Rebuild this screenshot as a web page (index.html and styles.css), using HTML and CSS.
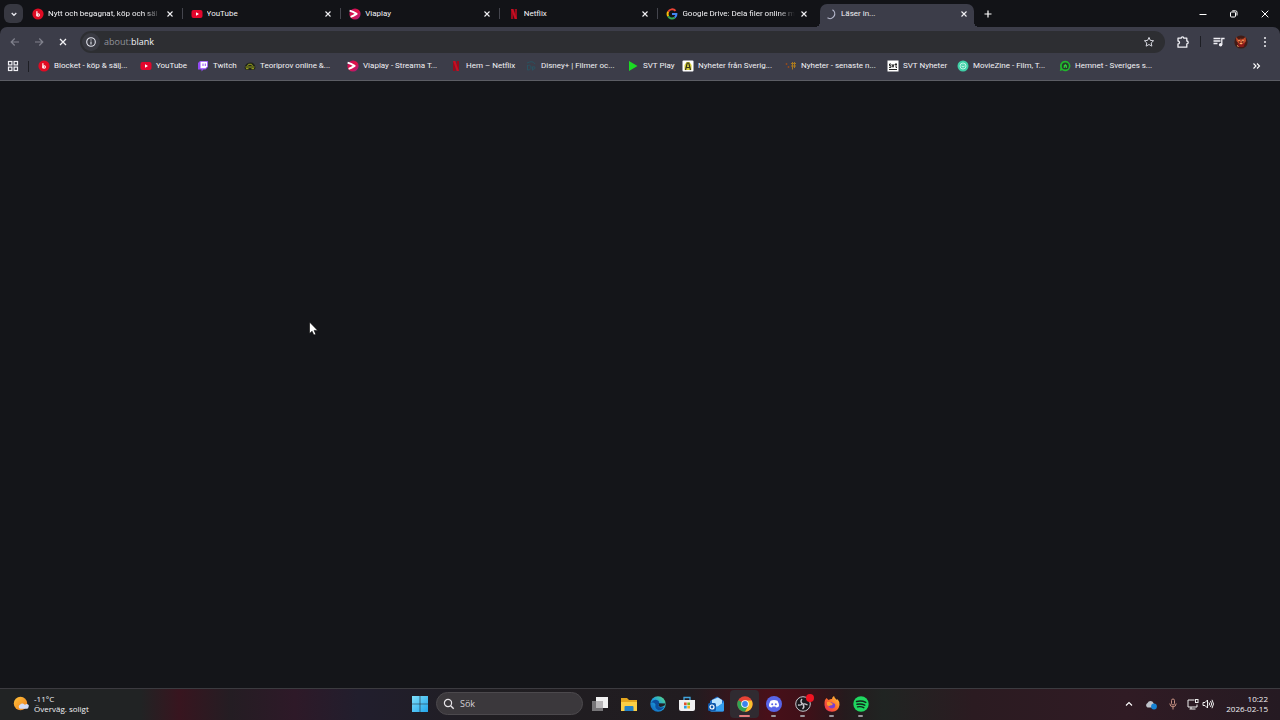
FILE: index.html
```html
<!DOCTYPE html>
<html lang="sv">
<head>
<meta charset="utf-8">
<title>Läser in...</title>
<link rel="stylesheet" href="styles.css">
</head>
<body>
<svg class="defs" aria-hidden="true">
  <defs>
    <linearGradient id="gVia" x1="0" y1="0" x2="1" y2="1"><stop offset="0" stop-color="#b80f6a"/><stop offset=".5" stop-color="#e21244"/><stop offset="1" stop-color="#9a1d8a"/></linearGradient>
    <linearGradient id="gWin" x1="0" y1="0" x2="1" y2="1"><stop offset="0" stop-color="#7fe0fb"/><stop offset="1" stop-color="#22a5ea"/></linearGradient>
    <linearGradient id="gEdge" x1="0" y1="1" x2="1" y2="0"><stop offset="0" stop-color="#0d5cb8"/><stop offset=".5" stop-color="#1f9fdc"/><stop offset="1" stop-color="#5fe07a"/></linearGradient>
    <linearGradient id="gFox" x1="0" y1="1" x2="1" y2="0"><stop offset="0" stop-color="#e8265a"/><stop offset=".5" stop-color="#ff6a2a"/><stop offset="1" stop-color="#ffd83d"/></linearGradient>
    <linearGradient id="gSun" x1="0" y1="0" x2="1" y2="1"><stop offset="0" stop-color="#ffc23c"/><stop offset="1" stop-color="#ee7d1c"/></linearGradient>
    <symbol id="close" viewBox="0 0 10 10"><path d="M2.500 2.500l5 5M7.500 2.500l-5 5" stroke="currentColor" stroke-width="1.100"/></symbol>
    <symbol id="blocket" viewBox="0 0 12 12"><circle cx="6" cy="6" r="5.600" fill="#e00b23"/><path d="M4.900 3.300v5" stroke="#fff" stroke-width="1.200"/><circle cx="6.200" cy="7" r="1.200" fill="none" stroke="#fff" stroke-width="1.100"/></symbol>
    <symbol id="youtube" viewBox="0 0 12 12"><rect x=".5" y="2" width="11" height="8" rx="2" fill="#e3062c"/><path d="M5 4.300L8 6 5 7.700z" fill="#fff"/></symbol>
    <symbol id="viaplay" viewBox="0 0 12 12"><circle cx="6" cy="6" r="5.600" fill="url(#gVia)"/><path d="M.6 2.700Q4 3.600 7.600 5.900 4 8.200 1.600 8.800" fill="none" stroke="#fff" stroke-width="1.900" stroke-linejoin="round"/></symbol>
    <symbol id="netflix" viewBox="0 0 12 12"><path d="M3 1h2.300v10H3zM6.700 1H9v10H6.700z" fill="#990b1b"/><path d="M3 1h2.300L9 11H6.700z" fill="#c70e22"/></symbol>
  </defs>
</svg>

<header class="browser">
  <div class="tabstrip">
    <button class="tab-search" aria-label="Sök bland flikar"><svg viewBox="0 0 10 10" class="i10"><path d="M2.700 4l2.300 2.300L7.300 4" fill="none" stroke="#e8e8ee" stroke-width="1.300"/></svg></button>
    <div class="tabs" role="tablist">
      <div class="tab" role="tab"><svg class="i12"><use href="#blocket"/></svg><span class="tab-title fade">Nytt och begagnat, köp och säl</span><button class="close" aria-label="Stäng"><svg class="i10"><use href="#close"/></svg></button></div>
      <div class="tab" role="tab"><svg class="i12"><use href="#youtube"/></svg><span class="tab-title">YouTube</span><button class="close" aria-label="Stäng"><svg class="i10"><use href="#close"/></svg></button></div>
      <div class="tab" role="tab"><svg class="i12"><use href="#viaplay"/></svg><span class="tab-title">Viaplay</span><button class="close" aria-label="Stäng"><svg class="i10"><use href="#close"/></svg></button></div>
      <div class="tab" role="tab"><svg class="i12"><use href="#netflix"/></svg><span class="tab-title">Netflix</span><button class="close" aria-label="Stäng"><svg class="i10"><use href="#close"/></svg></button></div>
      <div class="tab before-active" role="tab"><svg class="i12" viewBox="0 0 12 12" fill="none" stroke-width="2"><path d="M9.500 2.900A4.400 4.400 0 0 0 2.200 3.800" stroke="#ea4335"/><path d="M2.200 3.800a4.400 4.400 0 0 0 0 4.400" stroke="#fbbc05"/><path d="M2.200 8.200a4.400 4.400 0 0 0 6.600 1.400" stroke="#34a853"/><path d="M8.800 9.600A4.400 4.400 0 0 0 10.400 6H6" stroke="#4285f4"/></svg><span class="tab-title fade">Google Drive: Dela filer online m</span><button class="close" aria-label="Stäng"><svg class="i10"><use href="#close"/></svg></button></div>
      <div class="tab active" role="tab" aria-selected="true"><svg class="i12" viewBox="0 0 12 12"><path d="M7.500 1.800A4.600 4.600 0 0 1 2.500 9.800" fill="none" stroke="#b9bcd0" stroke-width="1.200"/></svg><span class="tab-title">Läser in...</span><button class="close" aria-label="Stäng"><svg class="i10"><use href="#close"/></svg></button></div>
    </div>
    <button class="new-tab" aria-label="Ny flik"><svg class="i10" viewBox="0 0 10 10"><path d="M5 1.500v7M1.500 5h7" stroke="#fff" stroke-width="1.200"/></svg></button>
    <div class="window-controls">
      <button aria-label="Minimera"><svg class="i10" viewBox="0 0 10 10"><path d="M1.500 5.500h7" stroke="#fff"/></svg></button>
      <button aria-label="Återställ"><svg class="i10" viewBox="0 0 10 10" fill="none" stroke="#fff"><rect x="1.500" y="3" width="5" height="5" rx="1"/><path d="M3.300 1.800h3.200A1.500 1.500 0 0 1 8 3.300v3.200"/></svg></button>
      <button aria-label="Stäng fönstret"><svg class="i10" viewBox="0 0 10 10"><path d="M1.700 1.700l6.600 6.600M8.300 1.700L1.700 8.300" stroke="#fff"/></svg></button>
    </div>
  </div>

  <div class="chrome">
    <div class="toolbar">
      <button class="nav dim" aria-label="Bakåt"><svg class="i12" viewBox="0 0 12 12"><path d="M10 6H2.500M5.700 2.500L2.200 6l3.500 3.500" fill="none" stroke="currentColor" stroke-width="1.200"/></svg></button>
      <button class="nav dim" aria-label="Framåt"><svg class="i12" viewBox="0 0 12 12"><path d="M2 6h7.500M6.300 2.500L9.800 6 6.300 9.500" fill="none" stroke="currentColor" stroke-width="1.200"/></svg></button>
      <button class="nav" aria-label="Avbryt"><svg class="i12" viewBox="0 0 12 12"><path d="M3 3l6 6M9 3L3 9" stroke="currentColor" stroke-width="1.300"/></svg></button>
      <div class="omnibox">
        <button class="site-info" aria-label="Webbplatsinformation"><svg class="i12" viewBox="0 0 12 12"><circle cx="6" cy="6" r="4.300" fill="none" stroke="#e4e5ee" stroke-width="1.100"/><path d="M6 5.400v3M6 3.400v1.100" stroke="#e4e5ee" stroke-width="1.100"/></svg></button>
        <div class="address" role="textbox" aria-label="Adress">about:<span>blank</span></div>
        <button class="star" aria-label="Bokmärk"><svg class="i12" viewBox="0 0 12 12"><path d="M6 1.400l1.350 3 3.250.35-2.400 2.200.65 3.200L6 8.500l-2.850 1.650.65-3.200-2.400-2.200 3.250-.35z" fill="none" stroke="#d6d7df"/></svg></button>
      </div>
      <button class="tool" aria-label="Tillägg"><svg class="i14" viewBox="0 0 14 14"><path d="M2 3.200h3.200a1.300 1.300 0 0 1 2.600 0h3V6a1.400 1.400 0 0 1 0 2.800v3.400H2V9a1.500 1.500 0 0 0 0-3z" fill="none" stroke="#f0f0f5" stroke-width="1.300" stroke-linejoin="round"/></svg></button>
      <span class="rule"></span>
      <button class="tool" aria-label="Mediekontroller"><svg class="i14" viewBox="0 0 14 14"><path d="M1.500 3.500h7M1.500 6h7M1.500 8.500h4M9.800 9.800V3.500h2.800" fill="none" stroke="#f0f0f5" stroke-width="1.300"/><circle cx="8.600" cy="9.800" r="1.700" fill="#f0f0f5"/></svg></button>
      <button class="tool" aria-label="Profil"><svg class="i14" viewBox="0 0 14 14"><circle cx="7" cy="7" r="6.600" fill="#421c16"/><path d="M2 2l3 3 1.500-2L9 4l2.500-2 .5 4-1.800 3-2.600 1.700-2.800-2L2.500 6z" fill="#c24a2a"/><path d="M3 8l2 4h4.500l2-5-4 2.500z" fill="#8b1919"/><path d="M4.300 5.300l2 .9M9.700 5.300l-2 .9M6 8.600h2.200M3 10.500l1.500 1" stroke="#ffb36c"/><path d="M5 7h1.200M8 7h1.200M7 3v1.500" stroke="#231010"/></svg></button>
      <button class="tool" aria-label="Meny"><svg class="i14" viewBox="0 0 14 14" fill="#f0f0f5"><circle cx="7" cy="3" r="1"/><circle cx="7" cy="7" r="1"/><circle cx="7" cy="11" r="1"/></svg></button>
    </div>

    <nav class="bookmarks" aria-label="Bokmärken">
      <button class="apps" aria-label="Appar"><svg class="i12" viewBox="0 0 12 12" fill="none" stroke="#f0f0f5" stroke-width="1.200"><rect x="1.500" y="1.500" width="3.400" height="3.400"/><rect x="7.100" y="1.500" width="3.400" height="3.400"/><rect x="1.500" y="7.100" width="3.400" height="3.400"/><rect x="7.100" y="7.100" width="3.400" height="3.400"/></svg></button>
      <span class="rule"></span>
      <div class="bookmark-list">
        <a href="#"><svg class="i12"><use href="#blocket"/></svg>Blocket - köp &amp; sälj...</a>
        <a href="#"><svg class="i12"><use href="#youtube"/></svg>YouTube</a>
        <a href="#"><svg class="i12" viewBox="0 0 12 12"><path d="M1 3l2-2h8v6L8.500 9.500h-2L4.500 11.500V9.500H1z" fill="#9349f5"/><path d="M3.500 1.800h6.700v4.800L8.500 8.200H3.500z" fill="#fff"/><path d="M6 3.500v2.500M8.300 3.500v2.500" stroke="#9349f5"/></svg>Twitch</a>
        <a href="#"><svg class="i12" viewBox="0 0 12 12"><path d="M.5 8Q1 3 6 2.500T11.500 8L10 10H2z" fill="#20241b"/><path d="M1.500 7h9M3.500 6l1-1.700h3l1 1.700" fill="none" stroke="#98a31c"/><path d="M2 8.700h2.500M7.500 8.700H10" stroke="#aab322"/></svg>Teoriprov online &amp;...</a>
        <a href="#"><svg class="i12"><use href="#viaplay"/></svg>Viaplay - Streama T...</a>
        <a href="#"><svg class="i12"><use href="#netflix"/></svg>Hem – Netflix</a>
        <a href="#"><svg class="i12" viewBox="0 0 12 12" fill="none" stroke="#295260"><path d="M2 3q6-3 8 1M2.500 5v5q4 0 3.500-3T2 6M7.500 6.500v4M7.500 7q3-1 2.500 1t-2.500 1"/></svg>Disney+ | Filmer oc...</a>
        <a href="#"><svg class="i12" viewBox="0 0 12 12"><path d="M2 1l8.500 5L2 11z" fill="#1bdb23"/></svg>SVT Play</a>
        <a href="#"><svg class="i12" viewBox="0 0 12 12"><rect x=".5" y=".5" width="11" height="11" rx="1" fill="#fff"/><path d="M2.500 10V5l2-3h3l2 3v5z" fill="#d8cf38"/><path d="M3.500 10l1.700-7h1.600l1.700 7M4.500 7.500h3" fill="none" stroke="#33331b" stroke-width="1.200"/></svg>Nyheter från Sverig...</a>
        <a href="#"><svg class="i12" viewBox="0 0 12 12" fill="none"><path d="M1.500 3v2M.5 4h2M3.500 6v2M2.500 7h2" stroke="#8c4a20"/><path d="M6 3.500h5M6 6h5M7.500 2v6M9.500 2v6M7.500 8v1.500" stroke="#a9791f"/></svg>Nyheter - senaste n...</a>
        <a href="#"><svg class="i12" viewBox="0 0 12 12"><rect x=".5" y=".5" width="11" height="11" fill="#fff"/><path d="M4 4H2.500v1.700H4v1.700H2M4.900 4L6 7.300 7.100 4M9 3v4.500h1M8 4.500h2M2 9.500h8" fill="none" stroke="#222"/></svg>SVT Nyheter</a>
        <a href="#"><svg class="i12" viewBox="0 0 12 12"><circle cx="6" cy="6" r="5.500" fill="#3fcfa6"/><circle cx="6" cy="6" r="3" fill="none" stroke="#d9fff4" stroke-width=".8"/><path d="M4.500 6.200q1.500 1.500 3 0M4.800 4.800h.6M6.700 4.800h.6" fill="none" stroke="#fff" stroke-width=".8"/></svg>MovieZine - Film, T...</a>
        <a href="#"><svg class="i12" viewBox="0 0 12 12"><path d="M6.300.8a5.200 5.200 0 1 1-3 9.500L.8 11l.6-3A5.200 5.200 0 0 1 6.300.8z" fill="#21b62c"/><circle cx="6.300" cy="6" r="3.500" fill="#263b2c"/><path d="M4.700 8V5.500l1.600-1.400 1.600 1.400V8H6.800V6.500h-1V8z" fill="#2fd53a"/></svg>Hemnet - Sveriges s...</a>
      </div>
      <button class="overflow" aria-label="Fler bokmärken"><svg class="i12" viewBox="0 0 12 12"><path d="M2.500 3.500L5 6 2.500 8.500M6 3.500L8.500 6 6 8.500" fill="none" stroke="#fff" stroke-width="1.100"/></svg></button>
    </nav>
  </div>
</header>

<main class="page">
  <svg class="pointer" viewBox="0 0 12 16" aria-hidden="true"><path d="M1.500 1v11.500l2.600-2.300 1.700 3.900 2-.9-1.700-3.800h3.600z" fill="#fff" stroke="#050506" stroke-width=".6"/></svg>
</main>

<footer class="taskbar">
  <button class="weather">
    <svg class="i16" viewBox="0 0 16 16"><circle cx="7.500" cy="7.500" r="6.700" fill="url(#gSun)"/><path d="M7 12.800a2.200 2.200 0 0 1 0-4 3 3 0 0 1 5 .2 2 2 0 0 1 3.500 2 1.800 1.800 0 0 1-1.500 1.800z" fill="#d4dcf5"/></svg>
    <span>-11°C<br>Överväg. soligt</span>
  </button>
  <div class="dock">
    <button class="app" aria-label="Start"><svg class="i16" viewBox="0 0 16 16" fill="url(#gWin)"><path d="M0 0h7.700v7.700H0zM8.300 0H16v7.700H8.300zM0 8.300h7.700V16H0zM8.300 8.300H16V16H8.300z"/></svg></button>
    <label class="search"><svg class="i12" viewBox="0 0 12 12"><circle cx="5" cy="5" r="3.600" fill="none" stroke="#e7e4e8" stroke-width="1.200"/><path d="M7.700 7.700l3 3" stroke="#e7e4e8" stroke-width="1.400"/></svg><input type="text" placeholder="Sök" aria-label="Sök"></label>
    <button class="app" aria-label="Aktivitetsvyn"><svg class="i16" viewBox="0 0 16 16"><path d="M4 1h12v11H4z" fill="#f1f1f1"/><path d="M0 5h11v10H0z" fill="#777578"/><path d="M4 5h7v7H4z" fill="#b7b5b7"/></svg></button>
    <button class="app" aria-label="Utforskaren"><svg class="i16" viewBox="0 0 16 16"><path d="M0 2h6l2 2h8v11H0z" fill="#e4a61e"/><path d="M0 6h16v9H0z" fill="#fbcf45"/><path d="M3.500 15v-4q0-1 1-1h7q1 0 1 1v4z" fill="#2381c6"/></svg></button>
    <button class="app" aria-label="Edge"><svg class="i16" viewBox="0 0 16 16"><circle cx="8" cy="8" r="7.700" fill="url(#gEdge)"/><path d="M1 7q3-5 7-2.500 2 1.500.5 4.500-.5 2 2.500 2.500 2.500 0 3.500-1-2.500 4.500-6.500 3.500-3.500-1.500-2.500-5.500Q4 5.500 1 7z" fill="#0c4f9f"/><path d="M8.700 7.200q.5 2-.3 2.600 1.200 1.800 4.100.8 2.500-.8 3-3.200" fill="#202027"/></svg></button>
    <button class="app" aria-label="Microsoft Store"><svg class="i16" viewBox="0 0 16 16"><path d="M5 4V1.500h6V4" fill="none" stroke="#41a6df" stroke-width="1.300"/><path d="M0 4h16v9q0 2-2 2H2q-2 0-2-2z" fill="#f0f0f2"/><path d="M5 6.500h2.700v2.700H5z" fill="#e2522c"/><path d="M8.300 6.500H11v2.700H8.300z" fill="#76b51e"/><path d="M5 9.800h2.700v2.700H5z" fill="#279fe0"/><path d="M8.300 9.800H11v2.700H8.300z" fill="#f3b21b"/></svg></button>
    <button class="app" aria-label="Outlook"><svg class="i16" viewBox="0 0 16 16"><path d="M2 5l7-4.500L16 5v9q0 1.500-1.500 1.500h-11Q2 15.500 2 14z" fill="#1b6bc8"/><path d="M4 4l6-2.500 4 2.500v4l-5 3-5-3z" fill="#b8e3ff"/><path d="M2 7l7 4 7-5v8q0 1.500-1.500 1.500h-11Q2 15.500 2 14z" fill="#349ef0"/><rect y="7" width="8" height="8" rx="1.500" fill="#1059ad"/><circle cx="4" cy="11" r="2" fill="none" stroke="#fff" stroke-width="1.200"/></svg></button>
    <button class="app current" aria-label="Chrome"><svg class="i16" viewBox="0 0 16 16"><circle cx="8" cy="8" r="7.700" fill="#e74335"/><path d="M8 8L1.300 4.200A7.700 7.700 0 0 0 8 15.700l3.500-6z" fill="#30a653"/><path d="M8 15.700A7.700 7.700 0 0 0 14.700 4.500H8L11.200 10z" fill="#fac02d"/><circle cx="8" cy="8" r="3.800" fill="#fff"/><circle cx="8" cy="8" r="2.900" fill="#3c83ed"/></svg></button>
    <button class="app open" aria-label="Discord"><svg class="i16" viewBox="0 0 16 16"><circle cx="8" cy="8" r="8" fill="#5865e8"/><path d="M4.500 4.800q3.500-1.500 7 0 1.700 3 1.500 5.500-1.500 1.300-3 1.300l-.5-1h-3l-.5 1q-1.500 0-3-1.300-.2-2.500 1.500-5.500z" fill="#fff"/><circle cx="6.200" cy="8.300" r="1" fill="#5865e8"/><circle cx="9.800" cy="8.300" r="1" fill="#5865e8"/></svg></button>
    <button class="app open" aria-label="OBS Studio"><svg class="i16" viewBox="0 0 16 16"><circle cx="8" cy="8" r="7.300" fill="#1a181c" stroke="#c9c8ce"/><path d="M7 3q-2.500 3 1 5M12.500 9q-3.500-2-4.500-.5M3 9q3.500.5 4.500-1.500M8 8.500q2 2.500-.5 4.500" fill="none" stroke="#c9c8ce" stroke-width="1.400"/></svg><i class="recording"></i></button>
    <button class="app open" aria-label="Firefox"><svg class="i16" viewBox="0 0 16 16"><path d="M1 4l1.500-2 2 2Q7 2.500 8 3 8 1 10 0q.5 2.500 3 4l.5-1Q16 6 15.500 9 14.500 15.500 8 15.700 1 15.500.5 9 .3 6 1 4z" fill="url(#gFox)"/><path d="M4 7.500q2-2 4-1l3 1.500q1 4-3 4.500-4-.5-4-5z" fill="#773ed0"/><path d="M3 6q3-1 4 .7L9 8q-1 1.500-3 1.500Q5 11 3 9z" fill="#ff9a2e"/></svg></button>
    <button class="app open" aria-label="Spotify"><svg class="i16" viewBox="0 0 16 16"><circle cx="8" cy="8" r="7.700" fill="#1fd760"/><path d="M3.500 5.500q5-1.300 9.300.9M4 8.300q4.200-1 7.800.9M4.500 10.900q3.500-.8 6.300.8" fill="none" stroke="#11241a" stroke-width="1.400" stroke-linecap="round"/></svg></button>
  </div>
  <div class="tray">
    <button aria-label="Visa dolda ikoner"><svg class="i12" viewBox="0 0 12 12"><path d="M3 7.500l3-3 3 3" fill="none" stroke="#fff" stroke-width="1.100"/></svg></button>
    <button aria-label="OneDrive"><svg class="i12" viewBox="0 0 12 12"><path d="M2.500 9.500a2.500 2.500 0 0 1 0-4.500 3.300 3.300 0 0 1 6 0l2 4.500z" fill="#bfc4cb"/><circle cx="9" cy="8.500" r="2.900" fill="#1683d4"/></svg></button>
    <button aria-label="Mikrofon"><svg class="i12" viewBox="0 0 12 12" fill="none" stroke="#c79182"><rect x="4.500" y="1" width="3" height="6" rx="1.500"/><path d="M2.800 5.500Q3 8.800 6 8.800t3.200-3.300M6 9v2.500"/></svg></button>
    <button class="system" aria-label="Nätverk och volym"><svg class="i12" viewBox="0 0 12 12" fill="none" stroke="#eee"><path d="M7.500 2H1v7h9V6.500M4 9v2M2.500 11h6"/><rect x="8.500" y="1.500" width="2.500" height="3"/></svg><svg class="i12" viewBox="0 0 12 12" fill="none" stroke="#eee"><path d="M1 4.500h2L5.500 2v8L3 7.500H1zM7 4.500q1.200 1.500 0 3M8.500 3q2.300 3 0 6M10 1.800q3 4.200 0 8.400"/></svg></button>
    <button class="clock"><time datetime="2026-02-15T10:22">10:22<br>2026-02-15</time></button>
  </div>
</footer>
</body>
</html>
```
FILE: styles.css
```css
* { box-sizing: border-box; }

body {
  margin: 0;
  min-height: 100vh;
  display: flex;
  flex-direction: column;
  background: #141519;
  color: #f2f2f5;
  font: 8px/12px Roboto, "Noto Sans", sans-serif;
}

button {
  display: flex;
  align-items: center;
  justify-content: center;
  padding: 0;
  border: 0;
  background: none;
  color: inherit;
  font: inherit;
}

svg { display: block; flex: none; }
.defs { position: absolute; width: 0; height: 0; }
.i10 { width: 10px; height: 10px; }
.i12 { width: 12px; height: 12px; }
.i14 { width: 14px; height: 14px; }
.i16 { width: 16px; height: 16px; }

/* Tab strip */
.browser { background: #121317; }
.tabstrip { display: flex; align-items: center; height: 27px; padding-left: 4px; }
.tab-search { width: 19px; height: 19px; border-radius: 6px; background: #373841; }
.tabs { display: flex; flex: 0 1 954px; min-width: 0; height: 27px; margin-left: 1px; }
.tab {
  display: flex;
  align-items: center;
  gap: 4px;
  flex: 1 1 0;
  min-width: 0;
  padding: 0 8px;
  position: relative;
}
.tab:not(.active):not(.before-active)::after {
  content: "";
  position: absolute;
  right: 0;
  top: 8px;
  width: 1px;
  height: 11px;
  background: #44454d;
}
.tab-title { flex: 1; min-width: 0; overflow: hidden; white-space: nowrap; }
.fade { mask-image: linear-gradient(90deg, #000 85%, transparent); }
.tab.active { margin: 4px 4px 0 3px; padding: 0 5px 4px 5px; border-radius: 7px 7px 0 0; background: #3c3d49; flex: 0 0 154px; }
.tab.active::before,
.tab.active::after {
  content: "";
  position: absolute;
  bottom: 0;
  width: 5px;
  height: 5px;
}
.tab.active::before { right: 100%; background: radial-gradient(circle at 0 0, transparent 5px, #3c3d49 5px); }
.tab.active::after { left: 100%; background: radial-gradient(circle at 100% 0, transparent 5px, #3c3d49 5px); }
.new-tab { width: 20px; height: 20px; }
.window-controls { display: flex; margin-left: auto; }
.window-controls button { width: 31px; height: 27px; }

/* Toolbar and bookmarks */
.chrome { border-radius: 7px 7px 0 0; border-bottom: 1px solid #5c5d64; background: #3c3d49; }
.toolbar { display: flex; align-items: center; height: 29px; padding: 0 3px; }
.nav { width: 24px; height: 22px; }
.dim { color: #81828d; }
.omnibox {
  display: flex;
  align-items: center;
  flex: 1;
  height: 22px;
  margin: 0 7px 0 5px;
  padding: 0 10px 0 2px;
  border-radius: 11px;
  background: #2d2e32;
}
.site-info { width: 18px; height: 18px; border-radius: 50%; background: #393a42; }
.address { flex: 1; padding-left: 4px; color: #92939b; font: 9px/12px "Open Sans", sans-serif; }
.address span { color: #f4f4f7; }
.tool { width: 22px; height: 22px; }
.tool:last-child { width: 25px; }
.rule { width: 1px; height: 11px; background: #1d1e24; }
.toolbar .rule { margin: 0 7px 0 6px; }

.bookmarks { display: flex; align-items: center; height: 24px; padding: 0 17px 4px 7px; }
.bookmarks .rule { margin: 0 9px; }
.bookmark-list {
  display: grid;
  grid-template-columns: 102px 57px 47px 103px 103px 75px 102px 55px 103px 102px 70px 102px 102px;
  flex: 1;
}
.bookmark-list a {
  display: flex;
  align-items: center;
  gap: 4px;
  color: inherit;
  text-decoration: none;
  white-space: nowrap;
}

/* Page */
.page { flex: 1; position: relative; }
.pointer { position: absolute; left: 308px; top: 240px; width: 12px; height: 16px; }

/* Taskbar */
.taskbar {
  display: grid;
  grid-template-columns: 1fr auto 1fr;
  align-items: center;
  height: 32px;
  padding-bottom: 2px;
  border-top: 1px solid #3c3b40;
  background: linear-gradient(90deg,
    #212324 0, #212324 11%, #38151f 14%, #241d23 18%, #2e1928 23%,
    #211e2d 28%, #201e22 38%, #211c20 54%, #481019 60%, #3f1018 63%,
    #251a1d 66%, #202422 69%, #2b1b21 76%, #301b24 88%, #251a22 100%);
  font-family: "Open Sans", "Noto Sans", sans-serif;
}
.weather { justify-self: start; gap: 5px; padding-left: 13px; line-height: 10px; text-align: left; }
.dock { display: flex; align-items: center; }
.app { position: relative; width: 29px; height: 28px; border-radius: 4px; }
.current { background: #302b31; }
.current::after,
.open::after {
  content: "";
  position: absolute;
  bottom: 1px;
  left: 12px;
  width: 5px;
  height: 2px;
  border-radius: 1px;
  background: #99959b;
}
.current::after { left: 9px; width: 11px; background: #e47d7d; }
.recording { position: absolute; top: 4px; right: 3px; width: 8px; height: 8px; border-radius: 50%; background: #f01422; }
.search {
  display: flex;
  align-items: center;
  gap: 5px;
  width: 147px;
  height: 23px;
  margin: 0 2px;
  padding: 0 6px;
  border: 1px solid #4c494d;
  border-radius: 12px;
  background: #3b383c;
}
.search input { flex: 1; min-width: 0; padding: 0; border: 0; outline: 0; background: none; color: #d5d2d6; font: inherit; font-size: 9px; }
.search input::placeholder { color: #d5d2d6; opacity: 1; }
.tray { display: flex; align-items: center; justify-self: end; padding-right: 12px; }
.tray button { width: 22px; height: 28px; }
.tray .system { width: 32px; gap: 3px; }
.tray .clock { width: 52px; justify-content: flex-end; line-height: 10px; text-align: right; }
```
